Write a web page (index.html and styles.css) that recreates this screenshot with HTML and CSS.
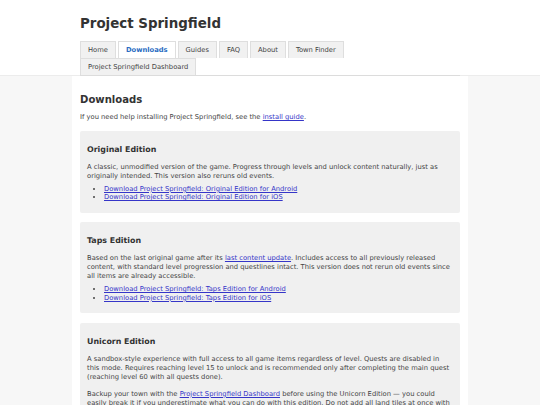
FILE: index.html
```html
<!DOCTYPE html>
<html lang="en">
<head>
<meta charset="utf-8">
<title>Downloads - Project Springfield</title>
<link rel="stylesheet" href="styles.css">
</head>
<body>
<header class="site-header">
  <div class="wrap">
    <h1 class="site-title">Project Springfield</h1>
    <nav>
      <ul class="tabs">
        <li><a class="tab" href="#">Home</a></li>
        <li><a class="tab active" href="#">Downloads</a></li>
        <li><a class="tab" href="#">Guides</a></li>
        <li><a class="tab" href="#">FAQ</a></li>
        <li><a class="tab" href="#">About</a></li>
        <li><a class="tab" href="#">Town Finder</a></li>
        <li><a class="tab" href="#">Project Springfield Dashboard</a></li>
      </ul>
    </nav>
  </div>
</header>
<main class="content">
  <h2 class="page-title">Downloads</h2>
  <p class="intro">If you need help installing Project Springfield, see the <a href="#">install guide</a>.</p>

  <section class="edition">
    <h3>Original Edition</h3>
    <p>A classic, unmodified version of the game. Progress through levels and unlock content naturally, just as originally intended. This version also reruns old events.</p>
    <ul>
      <li><a href="#">Download Project Springfield: Original Edition for Android</a></li>
      <li><a href="#">Download Project Springfield: Original Edition for iOS</a></li>
    </ul>
  </section>

  <section class="edition">
    <h3>Taps Edition</h3>
    <p>Based on the last original game after its <a href="#">last content update</a>. Includes access to all previously released content, with standard level progression and questlines intact. This version does not rerun old events since all items are already accessible.</p>
    <ul>
      <li><a href="#">Download Project Springfield: Taps Edition for Android</a></li>
      <li><a href="#">Download Project Springfield: Taps Edition for iOS</a></li>
    </ul>
  </section>

  <section class="edition">
    <h3>Unicorn Edition</h3>
    <p>A sandbox-style experience with full access to all game items regardless of level. Quests are disabled in this mode. Requires reaching level 15 to unlock and is recommended only after completing the main quest (reaching level 60 with all quests done).</p>
    <p>Backup your town with the <a href="#">Project Springfield Dashboard</a> before using the Unicorn Edition — you could easily break it if you underestimate what you can do with this edition. Do not add all land tiles at once with the Unicorn Edition. Doing so removes land expansion options and may permanently lock quests requiring land expansion.</p>
    <ul>
      <li><a href="#">Download Project Springfield: Unicorn Edition for Android</a></li>
      <li><a href="#">Download Project Springfield: Unicorn Edition for iOS</a></li>
    </ul>
  </section>
</main>
</body>
</html>
```

FILE: styles.css
```css
html, body {
  margin: 0;
  padding: 0;
}

body {
  background: #f7f7f7;
  color: #444;
  font-family: "DejaVu Sans", Verdana, sans-serif;
  font-size: 6.75px;
  line-height: 9px;
}

a {
  color: #3535c8;
}

.site-header {
  background: #fff;
  border-bottom: 1px solid #ececec;
}

.wrap {
  width: 380px;
  margin: 0 auto;
  padding-top: 16.4px;
}

.site-title {
  margin: 0;
  font-size: 13.4px;
  line-height: 16px;
  font-weight: bold;
  color: #333;
}

.tabs {
  list-style: none;
  margin: 8.6px 0 -1px;
  padding: 0;
  display: flex;
  flex-wrap: wrap;
  column-gap: 2px;
  border-bottom: 1px solid #dcdcdc;
}

.tab {
  display: block;
  padding: 3.6px 7px 3.5px;
  line-height: 9px;
  border: 1px solid #dedede;
  border-bottom: 0;
  background: #f1f1f1;
  color: #444;
  text-decoration: none;
}

.tab.active {
  background: #fff;
  color: #2a6cc2;
  font-weight: bold;
}

.content {
  width: 380px;
  margin: 0 auto;
  padding: 17.5px 8px 20px;
  background: #fff;
}

.page-title {
  margin: 0;
  font-size: 10.1px;
  line-height: 12px;
  color: #333;
}

.intro {
  margin: 7.6px 0 8.6px;
}

.edition {
  background: #f0f0f0;
  border-radius: 2px;
  padding: 14px 7px 11px;
  margin-bottom: 9.5px;
}

.edition h3 {
  margin: 0;
  font-size: 7.9px;
  line-height: 10px;
  color: #333;
}

.edition p {
  margin: 8px 0 0;
}

.edition ul {
  margin: 4px 0 0;
  padding-left: 17px;
}

.edition li {
  line-height: 8.5px;
}
```
